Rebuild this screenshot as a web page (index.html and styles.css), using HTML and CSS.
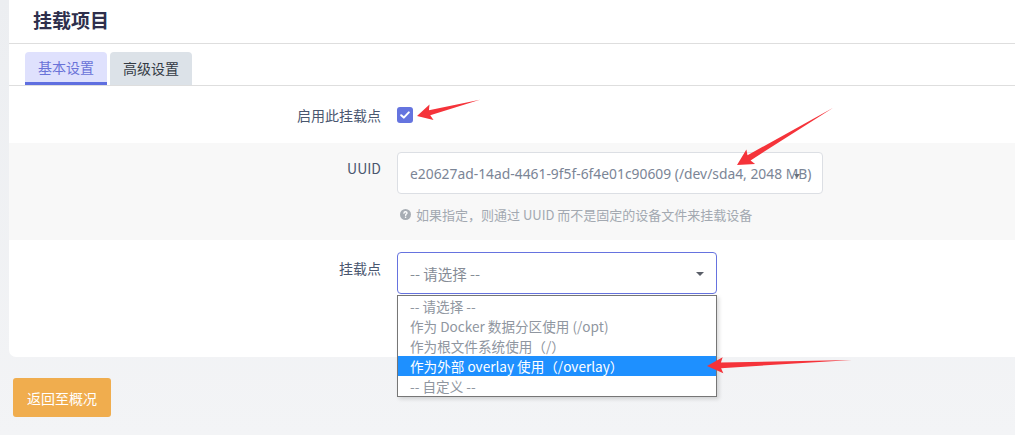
FILE: index.html
```html
<!DOCTYPE html>
<html lang="zh">
<head>
<meta charset="utf-8">
<title>挂载项目</title>
<link rel="stylesheet" href="styles.css">
</head>
<body>
<div class="page">
  <div class="card">
    <div class="card-head"><h2 class="title">挂载项目</h2></div>
    <div class="tabs">
      <div class="tab active">基本设置</div>
      <div class="tab">高级设置</div>
    </div>
    <div class="row row-check">
      <div class="label">启用此挂载点</div>
      <div class="control ctl-check">
        <span class="checkbox">
          <svg width="10" height="8" viewBox="0 0 10 8"><path d="M1.2 4.2 L3.8 6.6 L8.8 1.4" fill="none" stroke="#fff" stroke-width="2" stroke-linecap="round" stroke-linejoin="round"/></svg>
        </span>
      </div>
    </div>
    <div class="row alt row-uuid">
      <div class="label label-pad">UUID</div>
      <div class="control">
        <div class="input uuid">e20627ad-14ad-4461-9f5f-6f4e01c90609 (/dev/sda4, 2048 MB)<span class="caret-mini"></span></div>
        <div class="help">
          <svg width="11" height="11" viewBox="0 0 12 12"><circle cx="6" cy="6" r="6" fill="#a7adb4"/><path d="M4.3 4.6 C4.3 3.5 5.1 3 6 3 C7 3 7.7 3.6 7.7 4.4 C7.7 5.4 6.4 5.6 6.2 6.5 L6.2 7" fill="none" stroke="#fff" stroke-width="1.4" stroke-linecap="round"/><circle cx="6.1" cy="8.9" r="0.85" fill="#fff"/></svg>
          <span>如果指定，则通过 UUID 而不是固定的设备文件来挂载设备</span>
        </div>
      </div>
    </div>
    <div class="row row-mount">
      <div class="label label-pad">挂载点</div>
      <div class="control">
        <div class="select-wrap">
          <div class="select">-- 请选择 --<span class="caret"></span></div>
          <ul class="dropdown">
            <li>-- 请选择 --</li>
            <li>作为 Docker 数据分区使用 (/opt)</li>
            <li>作为根文件系统使用（/）</li>
            <li class="hl">作为外部 overlay 使用（/overlay）</li>
            <li>-- 自定义 --</li>
          </ul>
        </div>
      </div>
    </div>
  </div>
  <div class="actions">
    <button class="btn">返回至概况</button>
  </div>
</div>
<svg class="annot" width="1015" height="435" viewBox="0 0 1015 435">
  <g fill="#f5333a">
    <polygon transform="translate(417,116) rotate(-14.5)" points="0,0 15,-8 13,-2.6 65,0 13,2.6 15,8"/>
    <polygon transform="translate(737,165) rotate(-30.8)" points="0,0 16,-8.5 14,-3 112,0 14,3 16,8.5"/>
    <polygon transform="translate(707,366) rotate(-2.4)" points="0,0 16,-8 14,-2.8 145,0 14,2.8 16,8"/>
  </g>
</svg>
</body>
</html>
```
FILE: styles.css
```css
* { box-sizing: border-box; }
html, body { margin: 0; padding: 0; }
body {
  width: 1015px;
  height: 435px;
  overflow: hidden;
  background: linear-gradient(#eceef1, #f3f4f6);
  font-family: "Noto Sans CJK SC", "Noto Sans", sans-serif;
  font-size: 14px;
  color: #4b5871;
  position: relative;
}
.page { padding-left: 9px; }
.card {
  background: #fff;
  height: 357px;
  border-bottom-left-radius: 7px;
}
.card-head {
  height: 44px;
  border-bottom: 1px solid #dedede;
  padding-left: 24px;
  display: flex;
  align-items: center;
  padding-bottom: 4px;
}
.title {
  margin: 0;
  font-size: 19px;
  font-weight: 700;
  color: #2e2f4c;
}
.tabs {
  display: flex;
  gap: 3px;
  padding: 8px 0 0 16px;
  height: 42px;
  border-bottom: 1px solid #dedede;
  align-items: flex-end;
}
.tab {
  height: 33px;
  width: 82px;
  display: flex;
  align-items: center;
  justify-content: center;
  background: #dce2e8;
  color: #333a44;
  font-size: 14px;
  border-radius: 4px 4px 0 0;
  padding-bottom: 1px;
}
.tab.active {
  background: #dfe1fd;
  color: #6a73d8;
  border-bottom: 3px solid #5f6fe0;
  padding-bottom: 0;
}
.row {
  display: flex;
  align-items: flex-start;
  gap: 16px;
}
.row.alt { background: #f8f8f8; }
.label {
  width: 372px;
  text-align: right;
  color: #4a576f;
}
.ctl-check { display: flex; align-items: center; height: 100%; }
.row-check { height: 57px; align-items: center; }
.checkbox {
  width: 16px;
  height: 16px;
  border-radius: 3px;
  background: #6574df;
  display: flex;
  align-items: center;
  justify-content: center;
  margin-top: 1px;
}
.row-uuid { height: 97px; padding-top: 9px; }
.label-pad { padding-top: 7px; line-height: 18px; }
.input {
  width: 426px;
  height: 42px;
  border: 1px solid #dcdfe4;
  border-radius: 4px;
  background: #fff;
  display: flex;
  align-items: center;
  padding-left: 12px;
  color: #7b8596;
  font-size: 13.85px;
  font-family: "Noto Sans", "Noto Sans CJK SC", sans-serif;
  position: relative;
  white-space: nowrap;
}
.caret-mini {
  position: absolute;
  left: 396px;
  top: 21px;
  width: 0;
  height: 0;
  border-left: 3px solid transparent;
  border-right: 3px solid transparent;
  border-top: 4px solid #6a717c;
}
.help {
  margin-top: 11px;
  padding-left: 3px;
  display: flex;
  align-items: center;
  gap: 5px;
  color: #a3a9b1;
  font-size: 13px;
}
.row-mount { height: 117px; padding-top: 12px; }
.select-wrap { position: relative; }
.select {
  width: 320px;
  height: 42px;
  border: 1px solid #6673df;
  border-radius: 4px;
  display: flex;
  align-items: center;
  padding-left: 12px;
  color: #868c96;
  font-size: 14.5px;
  position: relative;
}
.caret {
  position: absolute;
  right: 12px;
  top: 19px;
  border-left: 4px solid transparent;
  border-right: 4px solid transparent;
  border-top: 4px solid #5a5f68;
}
.dropdown {
  position: absolute;
  left: 0;
  top: 43px;
  width: 320px;
  margin: 0;
  padding: 0;
  list-style: none;
  background: #fff;
  border: 1px solid #767676;
  box-shadow: 2px 2px 4px rgba(0,0,0,0.15);
  z-index: 2;
}
.dropdown li {
  height: 20px;
  line-height: 20px;
  padding-left: 12px;
  color: #8f96a0;
  font-size: 13.6px;
  white-space: nowrap;
}
.dropdown li.hl {
  background: #1e90ff;
  color: #fff;
}
.actions { padding: 21px 0 0 4px; }
.btn {
  width: 98px;
  height: 39px;
  border: none;
  border-radius: 3px;
  background: #f0ad4e;
  color: #fff;
  font-family: "Noto Sans CJK SC", sans-serif;
  font-size: 14px;
  padding: 0;
}
.annot {
  position: absolute;
  left: 0;
  top: 0;
  pointer-events: none;
  z-index: 5;
}
```
